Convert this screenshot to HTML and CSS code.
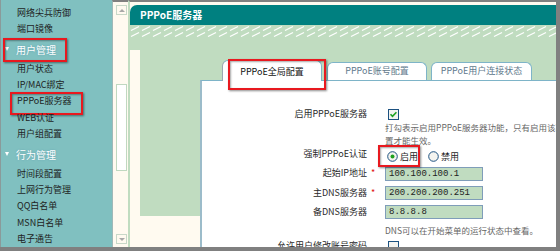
FILE: index.html
```html
<!DOCTYPE html>
<html lang="zh-CN">
<head>
  <meta charset="UTF-8" />
  <meta name="viewport" content="width=device-width, initial-scale=1.0"/>
  <title>PPPoE服务器</title>
  <link rel="stylesheet" href="styles.css">
</head>
<body>
  <div class="frame">
    <nav class="sidebar">
      <a class="item">网络尖兵防御</a>
      <a class="item">端口镜像</a>
      <div class="group marked"><span class="arrow"></span>用户管理</div>
      <a class="item">用户状态</a>
      <a class="item">IP/MAC绑定</a>
      <a class="item marked">PPPoE服务器</a>
      <a class="item">WEB认证</a>
      <a class="item">用户组配置</a>
      <div class="group"><span class="arrow"></span>行为管理</div>
      <a class="item">时间段配置</a>
      <a class="item">上网行为管理</a>
      <a class="item">QQ白名单</a>
      <a class="item">MSN白名单</a>
      <a class="item">电子通告</a>
    </nav>

    <div class="scrollbar">
      <span class="sb-btn up"></span>
      <span class="sb-thumb"></span>
      <span class="sb-btn down"></span>
    </div>

    <main class="main">
      <div class="titlebar">PPPoE服务器</div>
      <svg class="hatch" width="100%" height="13">
        <defs>
          <pattern id="rayas" width="11" height="6" patternUnits="userSpaceOnUse">
            <path d="M1 5.5 L9 1.5" stroke="#fff" stroke-width="1.2"/>
          </pattern>
        </defs>
        <rect width="100%" height="13" fill="#c0dcc0"/>
        <rect y="1" width="100%" height="12" fill="url(#rayas)"/>
      </svg>
      <div class="body">
        <div class="gutter"></div>
        <div class="stage">
          <div class="tabs">
            <a class="tab active">PPPoE全局配置</a>
            <a class="tab">PPPoE账号配置</a>
            <a class="tab">PPPoE用户连接状态</a>
          </div>

          <div class="panel">
            <div class="form">
              <label class="lbl">启用PPPoE服务器</label>
              <div class="ctl">
                <svg class="check" width="11" height="11" viewBox="0 0 11 11">
                  <rect x="0.5" y="0.5" width="10" height="10" fill="#f4f4f0" stroke="#1c5180"/>
                  <path d="M2.5 5.2 L4.5 7.4 L8.4 3.2" fill="none" stroke="#21a121" stroke-width="1.6"/>
                </svg>
              </div>
              <p class="hint">打勾表示启用PPPoE服务器功能，只有启用该项配<br>置才能生效。</p>

              <label class="lbl">强制PPPoE认证</label>
              <div class="ctl radios">
                <span class="radio">
                  <svg width="11" height="11" viewBox="0 0 11 11">
                    <circle cx="5.5" cy="5.5" r="4.8" fill="#f4f4f0" stroke="#1c5180"/>
                    <circle cx="5.5" cy="5.5" r="2" fill="#21a121"/>
                  </svg>启用
                </span>
                <span class="radio">
                  <svg width="11" height="11" viewBox="0 0 11 11">
                    <circle cx="5.5" cy="5.5" r="4.8" fill="#f4f4f0" stroke="#1c5180"/>
                  </svg>禁用
                </span>
                <span class="mark-radio"></span>
              </div>

              <label class="lbl">起始IP地址</label>
              <span class="req">*</span>
              <div class="ctl"><input class="field" value="100.100.100.1"></div>

              <label class="lbl">主DNS服务器</label>
              <span class="req">*</span>
              <div class="ctl"><input class="field" value="200.200.200.251"></div>

              <label class="lbl">备DNS服务器</label>
              <div class="ctl"><input class="field" value="8.8.8.8"></div>
              <p class="hint note">DNS可以在开始菜单的运行状态中查看。</p>

              <label class="lbl last">允许用户修改账号密码</label>
              <div class="ctl last">
                <svg class="check" width="11" height="11" viewBox="0 0 11 11">
                  <rect x="0.5" y="0.5" width="10" height="10" fill="#f4f4f0" stroke="#1c5180"/>
                </svg>
              </div>
            </div>
          </div>
        </div>
      </div>
    </main>
  </div>
</body>
</html>
```

FILE: styles.css
```css
:root {
  --gris: #808080;
  --teal: #80c0c0;
  --teal-dark: #008080;
  --crema: #fffaf0;
  --verde: #c0dcc0;
  --azul-borde: #7eb4c8;
  --rojo: #e8191f;
}
* { box-sizing: border-box; margin: 0; padding: 0; }
html, body { width: 560px; height: 251px; overflow: hidden; }
body {
  background: var(--gris);
  font-family: "Noto Sans CJK SC", sans-serif;
  font-size: 9px;
  color: #1e1e1e;
}
.frame {
  display: flex;
  width: 556px;
  height: 247px;
}

/* menu lateral */
.sidebar {
  flex-shrink: 0;
  width: 112px;
  background: var(--teal);
  border-left: 1px solid #8a9a9a;
  padding-top: 4.8px;
}
.item {
  display: block;
  position: relative;
  height: 16.4px;
  line-height: 16.4px;
  padding-left: 16px;
  white-space: nowrap;
}
.group {
  position: relative;
  display: flex;
  align-items: center;
  height: 23px;
  padding-left: 4px;
  font-size: 10px;
  color: #fff;
  text-shadow: 0 0 2px #5f9fae;
}
.arrow {
  width: 0;
  height: 0;
  margin-right: 7px;
  border-left: 2.5px solid transparent;
  border-right: 2.5px solid transparent;
  border-top: 4px solid #fff;
}
.marked::after {
  content: "";
  position: absolute;
  border: 2px solid var(--rojo);
  box-shadow: 1px 1px 2px rgba(0,0,0,0.45), inset 1px 1px 2px rgba(0,0,0,0.35);
}
.group.marked::after { left: 2px; top: 0; width: 60px; height: 20px; }
.item.marked::after { left: 9px; top: -1px; width: 69px; height: 19px; }

/* barra de desplazamiento */
.scrollbar {
  flex-shrink: 0;
  width: 16px;
  display: flex;
  flex-direction: column;
  padding: 3px 0 3px 3px;
  background: var(--crema);
  border-top: 2px solid var(--gris);
  border-left: 1px solid #9fb8b8;
}
.sb-btn {
  position: relative;
  width: 11px;
  height: 10px;
  border: 1px solid #c8d8c8;
  background: var(--crema);
}
.sb-btn::before {
  content: "";
  position: absolute;
  left: 2px;
  top: 3px;
  border-left: 3px solid transparent;
  border-right: 3px solid transparent;
}
.sb-btn.up::before { border-bottom: 3px solid #a8a8a8; }
.sb-btn.down::before { border-top: 3px solid #a8a8a8; }
.sb-btn.down { margin-top: auto; }
.sb-thumb {
  width: 11px;
  height: 87px;
  margin-top: 69px;
  background: #fff;
  border: 1px solid #c0d8c0;
}

/* zona principal */
.main {
  flex: 1;
  min-width: 0;
  position: relative;
  overflow: hidden;
  background: var(--crema);
  border-top: 2px solid var(--gris);
  border-left: 2px solid var(--verde);
  padding-top: 3px;
}
.titlebar {
  height: 20px;
  line-height: 20px;
  padding-left: 10px;
  background: var(--teal-dark);
  border-radius: 7px 0 0 0;
  color: #fff;
  font-size: 10px;
  font-weight: bold;
}
.hatch {
  display: block;
  height: 13px;
}
.body {
  display: flex;
  align-items: flex-start;
  height: 178px;
  background: var(--verde);
}
.gutter {
  flex-shrink: 0;
  width: 10px;
  height: 166px;
  margin-top: 12px;
  background: var(--crema);
}
.stage {
  flex: 1;
  min-width: 0;
  padding: 22px 0 0 60px;
}

/* pestañas */
.tabs {
  display: flex;
  align-items: flex-end;
  height: 20px;
  padding-left: 22px;
}
.tab {
  flex-shrink: 0;
  width: 100px;
  height: 18px;
  line-height: 16px;
  margin-right: 4px;
  text-align: center;
  background: #fff;
  border: 1px solid var(--azul-borde);
  border-bottom: none;
  border-radius: 6px 6px 0 0;
  color: #61798c;
  white-space: nowrap;
}
.tab.active {
  position: relative;
  z-index: 1;
  height: 21px;
  line-height: 22px;
  margin-bottom: -1px;
  margin-right: 5px;
  color: #111;
  border-left-color: #9aa8b0;
}
.tab.active::after {
  content: "";
  position: absolute;
  left: 5px;
  top: -2px;
  width: 94px;
  height: 27px;
  border: 2px solid var(--rojo);
  box-shadow: 1px 1px 2px rgba(0,0,0,0.45), inset 1px 1px 2px rgba(0,0,0,0.35);
}
.tab:last-child { width: 101px; }

/* panel del formulario */
.panel {
  width: 400px;
  height: 200px;
  background: #fff;
  border-left: 2px solid #9cbcca;
  border-top: 1px solid var(--azul-borde);
  padding-top: 26px;
}
.form {
  display: grid;
  grid-template-columns: 165px 18px auto;
  grid-template-rows: 14px 26px 19px 19px 19px 19px 14px 16px;
  line-height: 14px;
  white-space: nowrap;
}
.lbl { grid-column: 1; text-align: right; color: #2a2a2a; }
.req { grid-column: 2; padding-left: 4px; color: #e01010; }
.ctl { grid-column: 3; display: flex; align-items: center; height: 14px; }
.check { margin-left: 3px; }
.hint {
  grid-column: 3;
  font-size: 8.5px;
  line-height: 13px;
  color: #666;
}
.note { line-height: 14px; }
.form > :nth-child(n+8):not(.note):not(.last) { margin-top: 1px; }

.radios {
  position: relative;
  height: 19px;
  margin-top: 0 !important;
}
.radio {
  display: flex;
  align-items: center;
  gap: 2px;
  margin-left: 2px;
  margin-right: 8px;
}
.mark-radio {
  position: absolute;
  left: -7px;
  top: -2px;
  width: 42px;
  height: 22px;
  border: 2px solid var(--rojo);
  box-shadow: 1px 1px 2px rgba(0,0,0,0.45), inset 1px 1px 2px rgba(0,0,0,0.35);
}
.field {
  width: 98px;
  height: 14px;
  padding-left: 3px;
  border: 1px solid #7f9db9;
  background: var(--verde);
  font-family: "Liberation Mono", monospace;
  font-size: 9px;
  color: #222;
}
.last { margin-top: 2px; }
```
